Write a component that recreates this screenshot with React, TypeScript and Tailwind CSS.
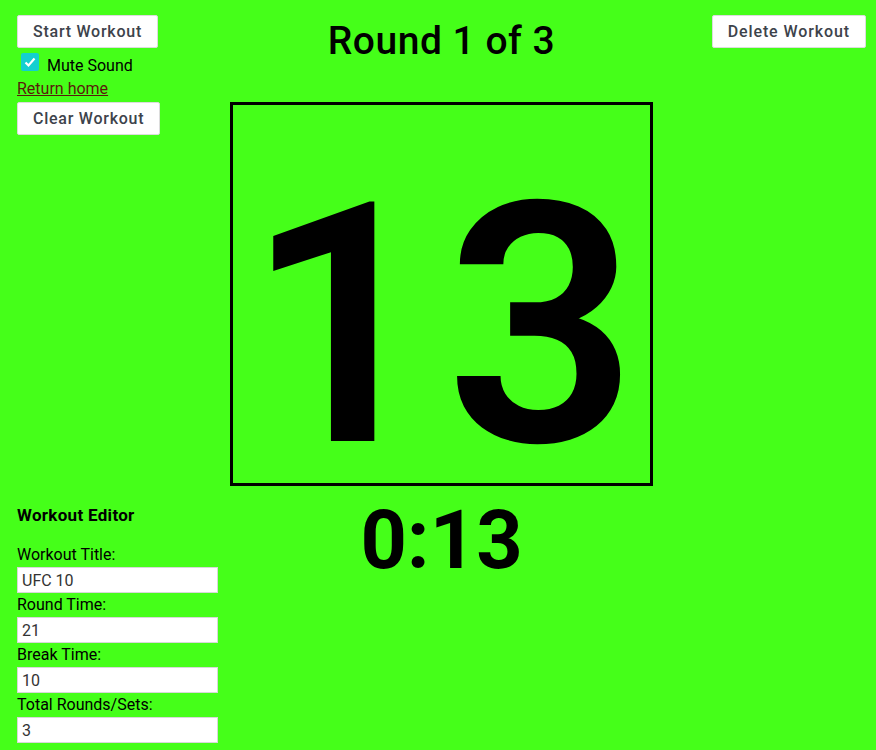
export default function App() {
  return (
    <div
      className="w-[876px] h-[750px] bg-[#45ff19] flex overflow-hidden text-black"
      style={{ fontFamily: "Roboto, 'Liberation Sans', sans-serif" }}
    >
      {/* left column */}
      <div className="w-[230px] shrink-0 pl-[17px] pt-[15px] flex flex-col items-start">
        <button className="h-[33px] px-[15px] bg-white border border-[#dcdcdc] rounded-[2px] text-[16px] font-medium text-[#3d434b] tracking-[0.75px]">
          Start Workout
        </button>
        <label className="flex items-start gap-[8px] mt-[8px] pl-[4px] text-[16px] leading-[20px]">
          <span className="-mt-[3px] w-[18px] h-[18px] rounded-[2px] bg-[#14cfd0] flex items-center justify-center">
            <svg width="14" height="14" viewBox="0 0 14 14">
              <path d="M2.5 7.5 L5.5 10.5 L11.5 3.5" fill="none" stroke="white" strokeWidth="2.2" />
            </svg>
          </span>
          Mute Sound
        </label>
        <a className="mt-[3px] text-[16px] leading-[20px] underline text-[#5a1a0a]">Return home</a>
        <button className="mt-[3px] h-[33px] px-[15px] bg-white border border-[#dcdcdc] rounded-[2px] text-[16px] font-medium text-[#3d434b] tracking-[0.75px]">
          Clear Workout
        </button>

        {/* editor */}
        <div className="mt-[370px] w-[201px]">
          <h2 className="text-[17px] font-bold leading-[20px] tracking-[0.3px]">Workout Editor</h2>
          <div className="mt-[18px] flex flex-col">
            {[
              ["Workout Title:", "UFC 10"],
              ["Round Time:", "21"],
              ["Break Time:", "10"],
              ["Total Rounds/Sets:", "3"],
            ].map(([label, value]) => (
              <div key={label} className="flex flex-col">
                <span className="text-[16px] leading-[24px]">{label}</span>
                <input
                  defaultValue={value}
                  className="h-[26px] w-[201px] bg-white border border-[#d8d8d8] px-[4px] text-[16px] text-[#333]"
                />
              </div>
            ))}
          </div>
        </div>
      </div>

      {/* center column */}
      <div className="w-[423px] shrink-0 flex flex-col items-center">
        <h1 className="mt-[19px] text-[39px] leading-[44px] font-medium tracking-[0.5px]">Round 1 of 3</h1>
        <div className="mt-[39px] w-[423px] h-[384px] border-[3px] border-black flex items-start justify-center">
          <span className="mt-[71px] text-[336px] leading-[300px] font-semibold tracking-[8px] pl-[8px]">13</span>
        </div>
        <div className="mt-[10px] text-[81px] leading-[90px] font-bold">0:13</div>
      </div>

      {/* right column */}
      <div className="flex-1 flex justify-end pr-[10px] pt-[15px] items-start">
        <button className="h-[33px] px-[15px] bg-white border border-[#dcdcdc] rounded-[2px] text-[16px] font-medium text-[#3d434b] tracking-[0.9px]">
          Delete Workout
        </button>
      </div>
    </div>
  );
}
